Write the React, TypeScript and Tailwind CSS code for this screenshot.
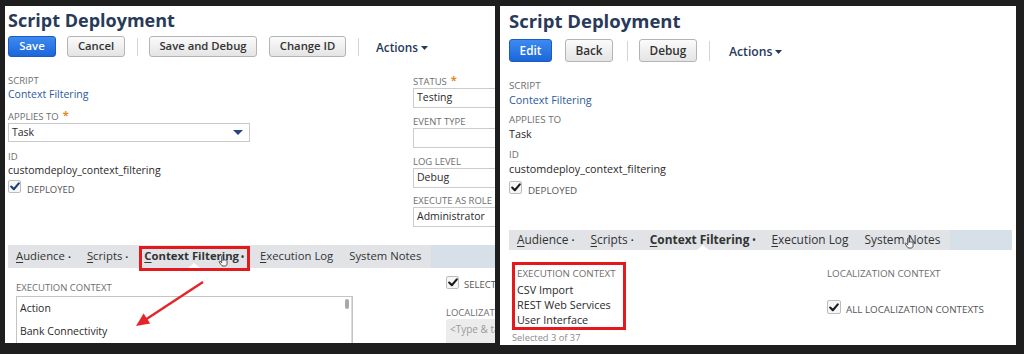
import React from "react";

const Check = ({ color = "#1b1b1b", size = 13 }: { color?: string; size?: number }) => (
  <span
    className="border border-[#bdbdbd] bg-[#f6f6f6] rounded-[2px] flex items-center justify-center shrink-0"
    style={{ width: size, height: size }}
  >
    <svg width="10" height="9" viewBox="0 0 10 9">
      <path d="M1.2 4.6 L3.8 7.2 L8.8 1.4" fill="none" stroke={color} strokeWidth="2.1" strokeLinecap="round" strokeLinejoin="round" />
    </svg>
  </span>
);

const Star = () => <span className="ml-[4px] text-[#e3891d] text-[11px] font-bold relative top-[-2px]">*</span>;

const Hand = () => (
  <svg width="11" height="12" viewBox="0 0 12 13">
    <path
      d="M4 1.5c0-.8 1.5-.8 1.5 0V6l.3-.6c.3-.6 1.3-.5 1.4.1.3-.5 1.3-.4 1.4.2.4-.4 1.3-.2 1.3.5V9.5C9.9 11 9 12 7.5 12H5.5C4.6 12 4 11.5 3.5 10.8L1.3 7.6c-.4-.6.4-1.3 1-.8L4 8.3Z"
      fill="#f4f4f4"
      stroke="#333"
      strokeWidth=".9"
    />
  </svg>
);

const Notch = () => (
  <span className="absolute bottom-0 left-1/2 -translate-x-1/2 w-0 h-0 border-l-[6px] border-r-[6px] border-b-[5px] border-l-transparent border-r-transparent border-b-white" />
);

function LeftPanel() {
  return (
    <div className="relative w-[490px] h-[337px] bg-white overflow-hidden pl-[3px] shrink-0">
      <div className="mt-[2px] text-[18px] leading-[24px] font-bold text-[#283a5a] whitespace-nowrap">Script Deployment</div>
      <div className="mt-[4px] flex items-center h-[21px] text-[11.3px] font-semibold">
        <div className="w-[48px] h-[21px] flex items-center justify-center rounded-[3px] border border-[#1a5cc0] bg-linear-to-b from-[#3d8af0] to-[#1b66da] text-white">Save</div>
        <div className="ml-[11px] w-[58px] h-[21px] flex items-center justify-center rounded-[3px] border border-[#b4b4b4] bg-linear-to-b from-[#fbfbfb] to-[#e4e4e4] text-[#333]">Cancel</div>
        <div className="ml-[12px] w-px h-[18px] bg-[#d4d4d4]" />
        <div className="ml-[11px] w-[108px] h-[21px] flex items-center justify-center rounded-[3px] border border-[#b4b4b4] bg-linear-to-b from-[#fbfbfb] to-[#e4e4e4] text-[#333]">Save and Debug</div>
        <div className="ml-[12px] w-[77px] h-[21px] flex items-center justify-center rounded-[3px] border border-[#b4b4b4] bg-linear-to-b from-[#fbfbfb] to-[#e4e4e4] text-[#333]">Change ID</div>
        <div className="ml-[12px] w-px h-[18px] bg-[#d4d4d4]" />
        <div className="ml-[17px] flex items-center text-[#26395b] text-[11.8px] mt-[3px]">
          Actions
          <svg className="ml-[3px]" width="7" height="4" viewBox="0 0 7 4"><path d="M0 0h7L3.5 4z" fill="#26395b" /></svg>
        </div>
      </div>
      <div className="flex">
        <div className="w-[242px] shrink-0">
          <div className="mt-[17px] text-[9.5px] leading-[13px] text-[#6e6e6e]">SCRIPT</div>
          <div className="text-[10.5px] leading-[15px] text-[#2d5a9c]">Context Filtering</div>
          <div className="mt-[8px] text-[9.5px] leading-[13px] text-[#6e6e6e] flex items-start">APPLIES TO<Star /></div>
          <div className="h-[19px] border border-[#c9c9c9] flex items-center justify-between pl-[3px] pr-[6px] text-[10.5px] text-[#2a2a2a]">
            Task
            <svg width="10" height="5" viewBox="0 0 10 5"><path d="M0 0h10L5 5z" fill="#28467a" /></svg>
          </div>
          <div className="mt-[8px] text-[9.5px] leading-[13px] text-[#6e6e6e]">ID</div>
          <div className="text-[10.5px] leading-[15px] text-[#2a2a2a]">customdeploy_context_filtering</div>
          <div className="mt-[2px] flex items-start">
            <Check color="#1d3f78" />
            <span className="ml-[6px] mt-[3px] text-[9.5px] leading-[13px] text-[#555]">DEPLOYED</span>
          </div>
        </div>
        <div className="ml-[163px] w-[120px] shrink-0">
          <div className="mt-[19px] text-[9.5px] leading-[12px] text-[#6e6e6e] flex items-start whitespace-nowrap">STATUS<Star /></div>
          <div className="h-[20px] border border-[#cbcbcb] flex items-center pl-[3px] text-[10.5px] text-[#2a2a2a]">Testing</div>
          <div className="mt-[8px] text-[9.5px] leading-[12px] text-[#6e6e6e] whitespace-nowrap">EVENT TYPE</div>
          <div className="h-[20px] border border-[#cbcbcb]" />
          <div className="mt-[8px] text-[9.5px] leading-[12px] text-[#6e6e6e] whitespace-nowrap">LOG LEVEL</div>
          <div className="h-[20px] border border-[#cbcbcb] flex items-center pl-[3px] text-[10.5px] text-[#2a2a2a]">Debug</div>
          <div className="mt-[7px] text-[9.5px] leading-[12px] text-[#6e6e6e] whitespace-nowrap">EXECUTE AS ROLE</div>
          <div className="h-[20px] border border-[#cbcbcb] flex items-center pl-[3px] text-[10.5px] text-[#2a2a2a]">Administrator</div>
        </div>
      </div>
      <div className="mt-[18px] h-[23px] flex text-[11.3px] text-[#333] whitespace-nowrap">
        <div className="flex items-center bg-[#e1e3e7] pr-[2px]">
          <div className="px-[8px] h-full flex items-center"><span className="underline underline-offset-2">A</span>udience<span className="ml-[3px] text-[8px]">•</span></div>
          <div className="px-[8px] h-full flex items-center"><span className="underline underline-offset-2">S</span>cripts<span className="ml-[3px] text-[8px]">•</span></div>
          <div className="relative px-[8px] h-full flex items-center font-bold"><span className="underline underline-offset-2">C</span>ontext Filtering<span className="ml-[2px] text-[8px]">•</span><Notch /></div>
          <div className="px-[8px] h-full flex items-center"><span className="underline underline-offset-2">E</span>xecution Log</div>
          <div className="px-[8px] h-full flex items-center">System Notes</div>
        </div>
        <div className="flex-1 bg-[#d7dfe8]" />
      </div>
      <div className="flex">
        <div className="ml-[8px] w-[337px] shrink-0">
          <div className="mt-[13px] text-[9.5px] leading-[13px] text-[#6e6e6e]">EXECUTION CONTEXT</div>
          <div className="mt-[2px] h-[60px] border border-[#c4c4c4] relative text-[10.5px] text-[#2a2a2a]">
            <div className="h-[23px] flex items-center pl-[3px]">Action</div>
            <div className="h-[23px] flex items-center pl-[3px]">Bank Connectivity</div>
            <div className="absolute right-[3px] top-[2px] w-[4px] h-[10px] rounded-full bg-[#a9a9a9]" />
            <div className="absolute right-0 top-0 bottom-0 w-px bg-[#dcdcdc]" />
          </div>
        </div>
        <div className="ml-[93px] w-[120px] shrink-0">
          <div className="mt-[8px] flex items-start whitespace-nowrap">
            <Check />
            <span className="ml-[5px] mt-[2px] text-[9.5px] leading-[13px] text-[#555]">SELECT ALL</span>
          </div>
          <div className="mt-[15px] text-[9.5px] leading-[13px] text-[#6e6e6e] whitespace-nowrap">LOCALIZATION CONTEXT</div>
          <div className="h-[30px] bg-[#ececec] rounded-[3px] pl-[4px] pt-[3px] text-[10px] text-[#9a9a9a] whitespace-nowrap">&lt;Type &amp; tab for single value&gt;</div>
        </div>
      </div>
      {/* annotations */}
      <div className="absolute left-[134px] top-[240px] w-[111px] h-[25px] border-[3px] border-[#e3191b]" />
      <div className="absolute left-[213px] top-[249px]"><Hand /></div>
      <svg className="absolute left-0 top-0" width="490" height="337" viewBox="0 0 490 337">
        <line x1="198" y1="276" x2="140" y2="314" stroke="#e3252a" strokeWidth="2.4" />
        <polygon points="131,320 138.6,307.5 145.2,317.6" fill="#e3252a" />
      </svg>
    </div>
  );
}

function RightPanel() {
  return (
    <div className="relative w-[516px] h-[339px] bg-white overflow-hidden pl-[9px] shrink-0">
      <div className="mt-[3px] text-[18.5px] leading-[24px] font-bold text-[#283a5a] whitespace-nowrap">Script Deployment</div>
      <div className="mt-[6px] flex items-center h-[23px] text-[11.8px] font-semibold">
        <div className="w-[43px] h-[23px] flex items-center justify-center rounded-[3px] border border-[#1a5cc0] bg-linear-to-b from-[#3d8af0] to-[#1b66da] text-white">Edit</div>
        <div className="ml-[13px] w-[48px] h-[23px] flex items-center justify-center rounded-[3px] border border-[#b4b4b4] bg-linear-to-b from-[#fbfbfb] to-[#e4e4e4] text-[#333]">Back</div>
        <div className="ml-[14px] w-px h-[20px] bg-[#d4d4d4]" />
        <div className="ml-[11px] w-[58px] h-[23px] flex items-center justify-center rounded-[3px] border border-[#b4b4b4] bg-linear-to-b from-[#fbfbfb] to-[#e4e4e4] text-[#333]">Debug</div>
        <div className="ml-[12px] w-px h-[20px] bg-[#d4d4d4]" />
        <div className="ml-[19px] flex items-center text-[#26395b] text-[12.2px] mt-[3px]">
          Actions
          <svg className="ml-[3px]" width="7" height="4" viewBox="0 0 7 4"><path d="M0 0h7L3.5 4z" fill="#26395b" /></svg>
        </div>
      </div>
      <div className="mt-[17px] text-[9.8px] leading-[13px] text-[#6e6e6e]">SCRIPT</div>
      <div className="text-[10.8px] leading-[15px] text-[#2d5a9c]">Context Filtering</div>
      <div className="mt-[6px] text-[9.8px] leading-[13px] text-[#6e6e6e]">APPLIES TO</div>
      <div className="text-[10.8px] leading-[15px] text-[#2a2a2a]">Task</div>
      <div className="mt-[7px] text-[9.8px] leading-[13px] text-[#6e6e6e]">ID</div>
      <div className="text-[10.8px] leading-[16px] text-[#2a2a2a]">customdeploy_context_filtering</div>
      <div className="mt-[4px] flex items-start">
        <Check />
        <span className="ml-[6px] mt-[3px] text-[9.8px] leading-[13px] text-[#555]">DEPLOYED</span>
      </div>
      <div className="mt-[33px] mr-[4px] h-[20px] flex text-[11.9px] text-[#333] whitespace-nowrap">
        <div className="flex items-center bg-[#e1e3e7] pr-[2px]">
          <div className="px-[8px] h-full flex items-center"><span className="underline underline-offset-2">A</span>udience<span className="ml-[3px] text-[8px]">•</span></div>
          <div className="px-[8px] h-full flex items-center"><span className="underline underline-offset-2">S</span>cripts<span className="ml-[3px] text-[8px]">•</span></div>
          <div className="relative px-[8px] h-full flex items-center font-bold"><span className="underline underline-offset-2">C</span>ontext Filtering<span className="ml-[3px] text-[8px]">•</span><Notch /></div>
          <div className="px-[8px] h-full flex items-center"><span className="underline underline-offset-2">E</span>xecution Log</div>
          <div className="px-[8px] h-full flex items-center">System Notes</div>
        </div>
        <div className="flex-1 bg-[#d7dfe8]" />
      </div>
      <div className="flex">
        <div className="ml-[3px] shrink-0">
          <div className="mt-[12px] w-[114px] border-[3px] border-[#e3191b] pl-[2px] pt-[2px] whitespace-nowrap">
            <div className="text-[9.8px] leading-[13px] text-[#6e6e6e]">EXECUTION CONTEXT</div>
            <div className="mt-[2px] text-[10.8px] leading-[15px] text-[#2a2a2a]">CSV Import</div>
            <div className="text-[10.8px] leading-[15px] text-[#2a2a2a]">REST Web Services</div>
            <div className="text-[10.8px] leading-[15px] text-[#2a2a2a]">User Interface</div>
          </div>
          <div className="mt-[1px] text-[9.3px] leading-[13px] text-[#8a8a8a]">Selected 3 of 37</div>
        </div>
        <div className="ml-[201px] shrink-0">
          <div className="mt-[17px] text-[9.8px] leading-[13px] text-[#6e6e6e] whitespace-nowrap">LOCALIZATION CONTEXT</div>
          <div className="mt-[20px] flex items-start whitespace-nowrap">
            <Check size={14} />
            <span className="ml-[5px] mt-[3px] text-[9.8px] leading-[13px] text-[#555]">ALL LOCALIZATION CONTEXTS</span>
          </div>
        </div>
      </div>
      <div className="absolute left-[404px] top-[231px]"><Hand /></div>
    </div>
  );
}

export default function App() {
  return (
    <div className="w-[1024px] h-[354px] bg-[#1e1e1e] flex items-start gap-[5px] pl-[5px] pt-[6px] overflow-hidden font-['Open_Sans','Noto_Sans',sans-serif]">
      <LeftPanel />
      <RightPanel />
    </div>
  );
}
